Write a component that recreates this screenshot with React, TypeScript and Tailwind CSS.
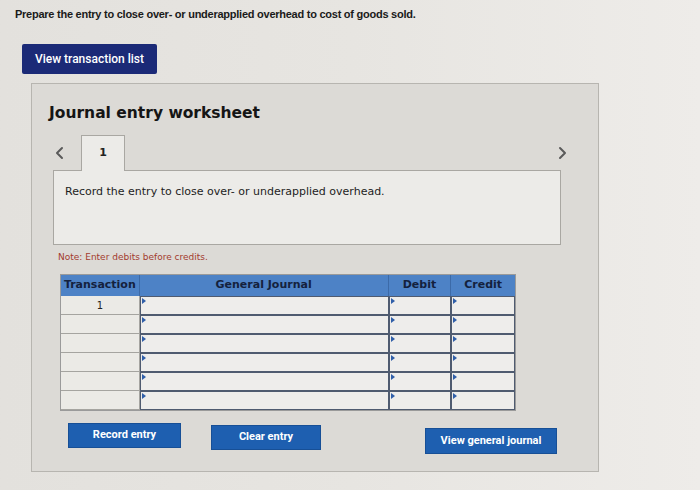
import React from 'react';

const rows = [1, 2, 3, 4, 5, 6];

// Small blue pointer drawn in the top-left corner of each editable cell
const CellMark = () => (
  <span className="absolute left-[1px] top-[1px] w-0 h-0 border-y-[3px] border-y-transparent border-l-[4px] border-l-[#2f5ea8]" />
);

const InputCell = ({ w }: { w: string }) => (
  <div className={`relative h-full ${w} border-[1.5px] border-[#4f5b70] bg-[#eeedeb]`}>
    <CellMark />
  </div>
);

const Chevron = ({ dir }: { dir: 'left' | 'right' }) => (
  <svg width="9" height="14" viewBox="0 0 9 14" fill="none" stroke="#5a5a5a" strokeWidth="2" strokeLinecap="round" strokeLinejoin="round">
    {dir === 'left' ? <polyline points="7,2 2,7 7,12" /> : <polyline points="2,2 7,7 2,12" />}
  </svg>
);

export default function App() {
  return (
    <div
      className="w-[700px] h-[490px] overflow-hidden bg-gradient-to-r from-[#e3e1dd] via-[#e7e5e1] to-[#eeece9] text-black"
      style={{ fontFamily: 'Arial, "Liberation Sans", sans-serif' }}
    >
      <p className="pt-[6px] pl-[15px] text-[11px] font-semibold tracking-[-0.25px] text-[#1a1a1a]">
        Prepare the entry to close over- or underapplied overhead to cost of goods sold.
      </p>

      <button
        className="ml-[22px] mt-[21px] w-[135px] h-[30px] rounded-[2px] bg-[#1b2a77] text-white text-[12px] font-medium"
        style={{ fontFamily: 'Roboto, sans-serif' }}
      >
        View transaction list
      </button>

      {/* Worksheet panel */}
      <div
        className="ml-[31px] mt-[9px] w-[568px] h-[389px] border border-[#b7b5b0] bg-[#dcdad6] pt-[19px]"
        style={{ fontFamily: '"DejaVu Sans", Verdana, sans-serif' }}
      >
        <h2 className="pl-[17px] text-[15.5px] leading-[20px] font-bold text-[#151515]">Journal entry worksheet</h2>

        {/* Tab strip */}
        <div className="mt-[12px] ml-[21px] w-[520px] h-[35px] flex items-center">
          <span className="w-[28px] pl-[2px] pt-[2px]">
            <Chevron dir="left" />
          </span>
          <div className="self-end h-[36px] w-[44px] border border-b-0 border-[#a9a7a2] bg-[#ecebe8] flex items-center justify-center text-[11px] font-semibold text-[#222] -mb-[1px] relative z-10">
            1
          </div>
          <span className="ml-auto pt-[2px] pr-[6px]">
            <Chevron dir="right" />
          </span>
        </div>
        <div className="ml-[21px] w-[508px] h-[75px] border border-[#a9a7a2] bg-[#ecebe8] pl-[11px] pt-[13px] text-[11px] text-[#1d1d1d]">
          Record the entry to close over- or underapplied overhead.
        </div>

        <p className="ml-[26px] mt-[6px] text-[9px] text-[#a33a2e]">Note: Enter debits before credits.</p>

        {/* Journal grid */}
        <div className="ml-[28px] mt-[10px] w-[456px] border border-[#9a9a9a]">
          <div className="flex h-[21px] bg-[#4d82c6] text-[#14213d] text-[11px] font-bold">
            <div className="w-[79px] flex items-center justify-center border-r border-[#3c6aa8]">Transaction</div>
            <div className="w-[250px] flex items-center justify-center border-r border-[#3c6aa8]">General Journal</div>
            <div className="w-[63px] flex items-center justify-center border-r border-[#3c6aa8]">Debit</div>
            <div className="w-[64px] flex items-center justify-center">Credit</div>
          </div>
          {rows.map((r) => (
            <div key={r} className="flex h-[19px]">
              <div className="w-[79px] flex items-center justify-center border-r border-b border-[#a5a4a0] bg-[#ebeae6] text-[10px] text-[#222]">
                {r === 1 ? '1' : ''}
              </div>
              <InputCell w="w-[250px]" />
              <InputCell w="w-[63px]" />
              <InputCell w="w-[64px]" />
            </div>
          ))}
        </div>

        {/* Action buttons */}
        <div className="flex items-start mt-[12px] ml-[36px] text-white text-[11px] font-bold" style={{ fontFamily: 'Roboto, sans-serif' }}>
          <button className="w-[113px] h-[25px] bg-[#1e5fb0] border border-[#174f96]">Record entry</button>
          <button className="ml-[30px] mt-[2px] w-[110px] h-[25px] bg-[#1e5fb0] border border-[#174f96]">Clear entry</button>
          <button className="ml-[104px] mt-[5px] w-[132px] h-[26px] bg-[#1e5fb0] border border-[#174f96]">View general journal</button>
        </div>
      </div>
    </div>
  );
}
